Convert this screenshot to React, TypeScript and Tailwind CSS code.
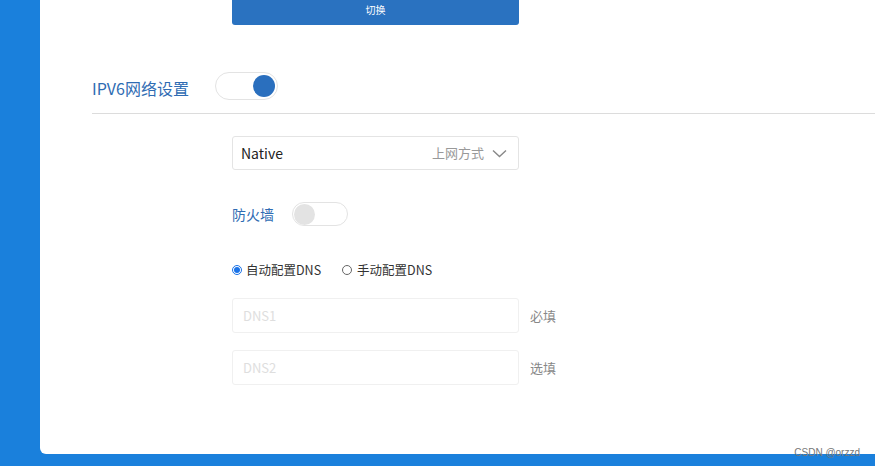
import React, { useState } from 'react';

const font = { fontFamily: '"Noto Sans CJK SC", "Noto Sans", sans-serif' };

const Toggle = ({ on, big }: { on: boolean; big?: boolean }) => (
  <div
    className={`flex items-center rounded-full border border-[#e3e3e3] bg-white px-[1px] ${
      big ? 'w-[63px] h-[28px]' : 'w-[56px] h-[24px]'
    } ${on ? 'justify-end' : 'justify-start'}`}
  >
    <div
      className={`rounded-full ${big ? 'w-[22px] h-[22px] mr-[1px]' : 'w-[21px] h-[21px]'} ${
        on ? 'bg-[#2a6fbe]' : 'bg-[#e3e3e3]'
      }`}
    />
  </div>
);

const Radio = ({ checked }: { checked: boolean }) => (
  <span
    className={`flex items-center justify-center w-[10px] h-[10px] rounded-full border ${
      checked ? 'border-[#1a73e8]' : 'border-[#666]'
    } bg-white`}
  >
    {checked && <span className="w-[6px] h-[6px] rounded-full bg-[#1a73e8]" />}
  </span>
);

export default function App() {
  const [dnsMode, setDnsMode] = useState<'auto' | 'manual'>('auto');

  return (
    <div className="w-[875px] h-[466px] bg-[#1a80dc] pl-[40px] pb-[12px] overflow-hidden" style={font}>
      <div className="relative h-full bg-white rounded-bl-[6px] pl-[52px]">
        {/* switch button */}
        <button className="ml-[140px] w-[287px] h-[25px] bg-[#2a72c0] text-white text-[10px] rounded-b-[3px] flex items-center justify-center pb-[6px]">
          切换
        </button>

        {/* IPV6 heading */}
        <div className="mt-[47px] flex items-center h-[28px]">
          <span className="w-[123px] text-[16px] text-[#2f6cb3] leading-none pt-[3px]">IPV6网络设置</span>
          <Toggle on big />
        </div>
        <div className="mt-[13px] border-t border-[#dcdcdc]" />

        <div className="pl-[140px]">
          {/* select */}
          <div className="mt-[22px] w-[287px] h-[34px] border border-[#e4e4e4] rounded-[3px] flex items-center pl-[8px] pr-[11px]">
            <span className="flex-1 text-[14px] text-[#222]">Native</span>
            <span className="text-[13px] text-[#999] mr-[8px]">上网方式</span>
            <svg width="15" height="9" viewBox="0 0 15 9" fill="none">
              <path d="M1 1.5 L7.5 7.5 L14 1.5" stroke="#888" strokeWidth="1.4" />
            </svg>
          </div>

          {/* firewall */}
          <div className="mt-[32px] flex items-center h-[24px]">
            <span className="w-[60px] text-[14px] text-[#2f6cb3]">防火墙</span>
            <Toggle on={false} />
          </div>

          {/* dns mode */}
          <div className="mt-[35px] flex items-center h-[18px] text-[12.5px] text-[#333]">
            <label className="flex items-center gap-[4px] cursor-pointer" onClick={() => setDnsMode('auto')}>
              <Radio checked={dnsMode === 'auto'} />
              <span>自动配置DNS</span>
            </label>
            <label className="ml-[21px] flex items-center gap-[5px] cursor-pointer" onClick={() => setDnsMode('manual')}>
              <Radio checked={dnsMode === 'manual'} />
              <span>手动配置DNS</span>
            </label>
          </div>

          {/* dns inputs */}
          <div className="mt-[19px] flex items-center">
            <input
              disabled
              placeholder="DNS1"
              className="w-[287px] h-[35px] border border-[#f0f0f0] rounded-[3px] px-[10px] text-[13px] placeholder:text-[#dedede] bg-white"
            />
            <span className="ml-[11px] text-[13px] text-[#888]">必填</span>
          </div>
          <div className="mt-[17px] flex items-center">
            <input
              disabled
              placeholder="DNS2"
              className="w-[287px] h-[35px] border border-[#f0f0f0] rounded-[3px] px-[10px] text-[13px] placeholder:text-[#dedede] bg-white"
            />
            <span className="ml-[11px] text-[13px] text-[#888]">选填</span>
          </div>
        </div>

        {/* watermark */}
        <span
          className="absolute right-[15px] bottom-[-4px] text-[10px] text-[#777] leading-none"
          style={{ fontFamily: '"Liberation Sans", sans-serif' }}
        >
          CSDN @orzzd
        </span>
      </div>
    </div>
  );
}
